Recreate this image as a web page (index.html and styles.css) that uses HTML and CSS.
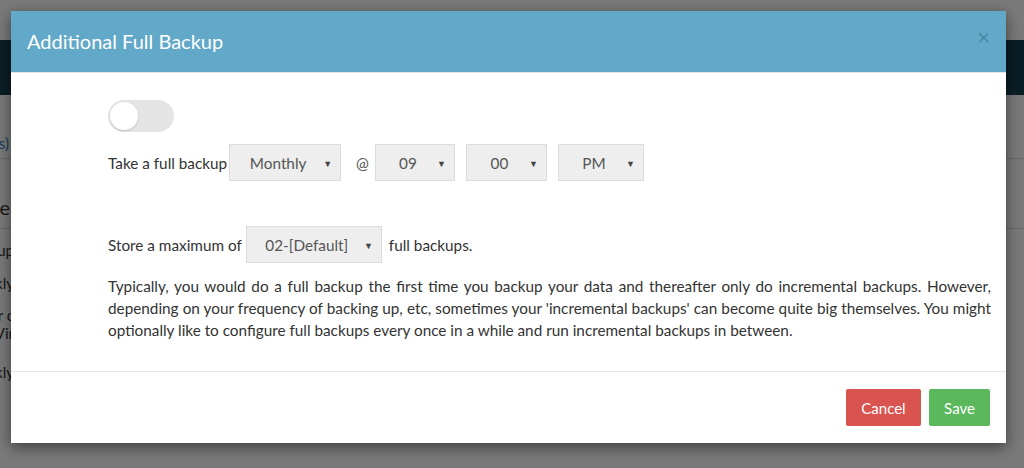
FILE: index.html
```html
<!DOCTYPE html>
<html>
<head>
<meta charset="utf-8">
<link rel="stylesheet" href="styles.css">
</head>
<body>
<div class="page">
  <div class="topbar"></div>
  <div class="bg-content">
    <div class="bg-line bg-link l1"><span>(Settings)</span></div>
    <div class="bg-sep s1"></div>
    <div class="bg-line bg-head l2"><span>Schedule</span></div>
    <div class="bg-sep s2"></div>
    <div class="bg-line l3"><span>Backup</span></div>
    <div class="bg-line l4"><span>Weekly</span></div>
    <div class="bg-line l5"><span>Your c</span></div>
    <div class="bg-line l6"><span>Vir</span></div>
    <div class="bg-line l7"><span>Weekly</span></div>
  </div>
</div>
<div class="overlay"></div>
<div class="modal">
  <div class="modal-header">
    <h2 class="modal-title">Additional Full Backup</h2>
    <span class="close">&times;</span>
  </div>
  <div class="modal-body">
    <div class="toggle"><span class="knob"></span></div>
    <div class="row row-first">
      <span class="label">Take a full backup</span>
      <div class="select sel-monthly">Monthly<span class="caret">&#9660;</span></div>
      <span class="at">@</span>
      <div class="select sel-hour">09<span class="caret">&#9660;</span></div>
      <div class="select sel-min">00<span class="caret">&#9660;</span></div>
      <div class="select sel-ampm">PM<span class="caret">&#9660;</span></div>
    </div>
    <div class="row row-second">
      <span class="label">Store a maximum of</span>
      <div class="select sel-max">02-[Default]<span class="caret">&#9660;</span></div>
      <span class="label">full backups.</span>
    </div>
    <p class="desc">Typically, you would do a full backup the first time you backup your data and thereafter only do incremental backups. However, depending on your frequency of backing up, etc, sometimes your 'incremental backups' can become quite big themselves. You might optionally like to configure full backups every once in a while and run incremental backups in between.</p>
  </div>
  <div class="modal-footer">
    <button class="btn btn-cancel">Cancel</button>
    <button class="btn btn-save">Save</button>
  </div>
</div>
</body>
</html>
```
FILE: styles.css
```css
* { box-sizing: border-box; }
html, body { margin: 0; padding: 0; }
body {
  width: 1024px;
  height: 468px;
  overflow: hidden;
  font-family: Lato, "Open Sans", sans-serif;
  background: #ffffff;
  position: relative;
}
.page {
  width: 1024px;
  height: 468px;
  overflow: hidden;
}
.topbar {
  margin-top: 40px;
  height: 55px;
  background: #16414f;
}
.bg-content {
  font-size: 15px;
  color: #333;
}
.bg-line {
  width: 14px;
  display: flex;
  justify-content: flex-end;
  white-space: nowrap;
  line-height: 20px;
  height: 20px;
}
.bg-sep { height: 1px; background: #dddddd; }
.bg-link { color: #337ab7; }
.bg-head { font-size: 20px; line-height: 26px; height: 26px; }
.l1 { margin-top: 38px; width: 9px; }
.s1 { margin-top: 5px; }
.l2 { margin-top: 35px; width: 10px; }
.s2 { margin-top: 8px; }
.l3 { margin-top: 11px; }
.l4 { margin-top: 13px; }
.l5 { margin-top: 12px; }
.l6 { margin-top: -2px; }
.l7 { margin-top: 19px; }
.overlay {
  position: absolute;
  inset: 0;
  background: rgba(0, 0, 0, 0.52);
}
.modal {
  position: absolute;
  left: 11px;
  top: 11px;
  width: 995px;
  height: 432px;
  background: #ffffff;
  box-shadow: 0 4px 14px rgba(0, 0, 0, 0.5);
  display: flex;
  flex-direction: column;
}
.modal-header {
  height: 62px;
  background: #62a8c8;
  display: flex;
  align-items: center;
  justify-content: space-between;
  padding: 0 16px 0 16px;
  border-bottom: 1px solid #e5e5e5;
}
.modal-title {
  margin: 0;
  font-size: 20px;
  font-weight: 400;
  color: #ffffff;
  margin-top: -2px;
}
.close {
  font-size: 22px;
  color: #3f7d98;
  opacity: 0.75;
  line-height: 1;
  margin-top: -10px;
}
.modal-body {
  padding: 27px 15px 0 97px;
  flex: 1;
  font-size: 15.3px;
  color: #333;
}
.toggle {
  width: 66px;
  height: 32px;
  border-radius: 16px;
  background: #e4e4e4;
  position: relative;
}
.knob {
  position: absolute;
  left: 2px;
  top: 2px;
  width: 28px;
  height: 28px;
  border-radius: 50%;
  background: #ffffff;
  box-shadow: 0 1px 2px rgba(0,0,0,0.15);
}
.row {
  display: flex;
  align-items: center;
}
.row-first { margin-top: 12px; }
.row-second { margin-top: 45px; }
.label { white-space: nowrap; }
.select {
  height: 37px;
  background: #eeeeee;
  border: 1px solid #dcdcdc;
  display: flex;
  align-items: center;
  justify-content: center;
  position: relative;
  font-size: 15.3px;
  color: #555;
  padding-right: 14px;
}
.caret {
  position: absolute;
  right: 8px;
  font-size: 9px;
  color: #444;
  top: 13px;
}
.sel-monthly { width: 112px; margin-left: 2px; }
.at { margin: 0 6px 0 15px; color: #555; }
.sel-hour { width: 80px; }
.sel-min { width: 81px; margin-left: 11px; }
.sel-ampm { width: 86px; margin-left: 11px; }
.sel-max { width: 136px; margin-left: 4px; margin-right: 7px; }
.desc {
  margin: 12px 0 0;
  line-height: 22px;
  text-align: justify;
}
.modal-footer {
  border-top: 1px solid #e5e5e5;
  height: 72px;
  display: flex;
  justify-content: flex-end;
  align-items: flex-start;
  padding: 17px 16px 0 0;
  gap: 8px;
}
.btn {
  height: 37px;
  border: none;
  border-radius: 2px;
  color: #ffffff;
  font-family: Lato, "Open Sans", sans-serif;
  font-size: 15px;
  padding: 0;
}
.btn-cancel { background: #d9534f; width: 75px; }
.btn-save { background: #5cb85c; width: 61px; }
```
